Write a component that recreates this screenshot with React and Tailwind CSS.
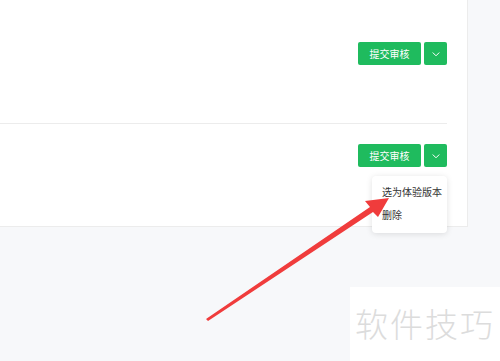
import React from 'react';

const ChevronDown = () => (
  <svg width="10" height="10" viewBox="0 0 10 10" fill="none">
    <path d="M2 3.8l3 3 3-3" stroke="white" strokeWidth="1" strokeLinecap="round" strokeLinejoin="round" />
  </svg>
);

const ActionGroup = () => (
  <div className="flex gap-[3px]">
    <button className="w-[63px] h-[23px] bg-[#1fbb5e] text-white text-[10px] rounded-[2px] flex items-center justify-center">
      提交审核
    </button>
    <button className="w-[23px] h-[23px] bg-[#1fbb5e] rounded-[2px] flex items-center justify-center">
      <ChevronDown />
    </button>
  </div>
);

const App = () => {
  return (
    <div
      className="relative w-[500px] h-[361px] overflow-hidden bg-[#f7f8fa]"
      style={{ fontFamily: '"Noto Sans CJK SC", "Noto Sans", sans-serif' }}
    >
      <div className="w-[468px] h-[227px] bg-white border-r border-b border-[#ececec] pr-[20px]">
        {/* first version row */}
        <div className="h-[124px] border-b border-[#ececec] flex justify-end pt-[42px]">
          <ActionGroup />
        </div>
        {/* second version row */}
        <div className="relative flex justify-end pt-[20px]">
          <ActionGroup />
          <div className="absolute right-0 top-[52px] w-[75px] h-[57px] bg-white rounded-[4px] shadow-[0_1px_6px_rgba(0,0,0,0.12)] text-[10px] text-[#333] pl-[10px] pt-[4px] leading-[23px] whitespace-nowrap">
            <div>选为体验版本</div>
            <div>删除</div>
          </div>
        </div>
      </div>

      {/* annotation arrow */}
      <svg className="absolute left-0 top-0" width="500" height="361" viewBox="0 0 500 361">
        <polygon points="206,319 370,207 365,201 389,198 378,217 373,212 208,321" fill="#f03c3c" />
      </svg>

      {/* watermark */}
      <div className="absolute left-[350px] top-[287px] w-[150px] h-[74px] bg-white flex items-center justify-center text-[33px] font-light text-[#dcdcdc] tracking-[2px]">
        软件技巧
      </div>
    </div>
  );
};

export default App;
